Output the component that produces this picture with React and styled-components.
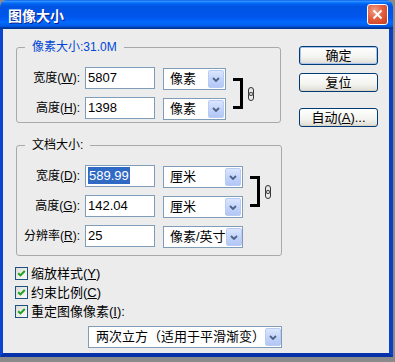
import React from "react";
import styled, { createGlobalStyle } from "styled-components";

const GlobalStyle = createGlobalStyle`
  html, body {
    margin: 0;
    padding: 0;
    background: #8a8a8a;
  }
  body {
    font-family: "Liberation Sans", "Noto Sans CJK SC", sans-serif;
    font-size: 12px;
    color: #000;
  }
`;

const Window = styled.div`
  width: 393px;
  height: 357px;
  display: flex;
  flex-direction: column;
  border-radius: 7px 7px 0 0;
  overflow: hidden;
`;

const TitleBar = styled.div`
  height: 29px;
  flex-shrink: 0;
  display: flex;
  align-items: center;
  justify-content: space-between;
  padding: 0 5px 0 8px;
  box-sizing: border-box;
  background: linear-gradient(
    to bottom,
    #0058ee 0%,
    #3a93ff 4%,
    #288eff 6%,
    #127dff 8%,
    #036ffc 10%,
    #0262ee 14%,
    #0057e5 20%,
    #0054e3 24%,
    #0055eb 56%,
    #005bf5 66%,
    #026afe 76%,
    #0062ef 86%,
    #0052d6 92%,
    #0040ab 94%,
    #003092 100%
  );
`;

const Title = styled.span`
  color: #fff;
  font-family: "Noto Sans CJK SC", sans-serif;
  font-weight: 700;
  font-size: 14px;
  line-height: 16px;
  text-shadow: 1px 1px #0a1e8a;
`;

const CloseButton = styled.div`
  width: 21px;
  height: 21px;
  box-sizing: border-box;
  border: 1px solid #fff;
  border-radius: 3px;
  background: radial-gradient(circle at 35% 30%, #f3a08a 0%, #e2613f 45%, #c8381b 100%);
  display: flex;
  align-items: center;
  justify-content: center;
`;

const Frame = styled.div`
  flex: 1;
  display: flex;
  background: #ececec;
  border-left: 3px solid #0b44cf;
  border-right: 4px solid #0b3fc4;
  border-bottom: 4px solid #0731a8;
  padding: 10px 11px 0 13px;
`;

const Main = styled.div`
  width: 266px;
  display: flex;
  flex-direction: column;
`;

const Group = styled.fieldset`
  margin: ${p => p.$top}px 0 0 0;
  padding: 12px 0 ${p => p.$bottom}px 0;
  border: 1px solid #a9a9a9;
  border-radius: 3px;
  width: ${p => p.$width}px;
  box-sizing: border-box;
  min-width: 0;
`;

const Legend = styled.legend`
  margin-left: 8px;
  padding: 0 7px;
  height: 16px;
  line-height: 16px;
  color: ${p => (p.$blue ? "#0046d5" : "#000")};
`;

const Rows = styled.div`
  display: grid;
  grid-template-columns: 68px 78px ${p => p.$selectWidth + 7}px 24px;
  grid-auto-rows: 22px;
  row-gap: 8px;
  align-items: start;
`;

const Label = styled.div`
  text-align: right;
  padding-right: 5px;
  line-height: 22px;
  white-space: nowrap;
`;

const InputBox = styled.div`
  width: 70px;
  height: 22px;
  box-sizing: border-box;
  border: 1px solid #7f9db9;
  background: #fff;
  padding-left: 2px;
  line-height: 20px;
  font-size: 13px;
`;

const Selected = styled.span`
  background: #316ac5;
  color: #fff;
  padding: 1px 1px;
`;

const Dropdown = styled.div`
  width: ${p => p.$width}px;
  height: 22px;
  margin-top: ${p => p.$shift || 0}px;
  box-sizing: border-box;
  border: 1px solid #7f9db9;
  background: #fff;
  display: flex;
  align-items: center;
  padding-left: ${p => p.$pad || 6}px;
  white-space: nowrap;
`;

const DropText = styled.span`
  font-size: 13px;
  line-height: 20px;
`;

const Arrow = styled.div`
  margin-left: auto;
  margin-right: 1px;
  width: 16px;
  height: 18px;
  box-sizing: border-box;
  border: 1px solid #b8cbf5;
  border-radius: 2px;
  background: linear-gradient(to bottom, #dbe6fd 0%, #c3d4fb 50%, #b3c7f5 100%);
  display: flex;
  align-items: center;
  justify-content: center;
  flex-shrink: 0;
`;

const LinkMark = styled.svg`
  grid-column: 4;
  grid-row: 1 / span 2;
`;

const Checks = styled.div`
  margin-top: 8px;
  margin-left: -1px;
  display: flex;
  flex-direction: column;
`;

const CheckRow = styled.div`
  height: 19px;
  display: flex;
  align-items: center;
  gap: 3px;
  line-height: 16px;
  font-size: 13px;
`;

const CheckBox = styled.span`
  width: 13px;
  height: 13px;
  box-sizing: border-box;
  border: 1px solid #1c5180;
  background: linear-gradient(135deg, #dcdcd7 0%, #fafaf9 100%);
  display: flex;
  align-items: center;
  justify-content: center;
`;

const ResampleRow = styled.div`
  margin-top: 5px;
  margin-left: 72px;
`;

const Side = styled.div`
  margin-left: 17px;
  padding-top: 7px;
  width: 79px;
  display: flex;
  flex-direction: column;
`;

const Button = styled.div`
  height: 19px;
  margin-top: ${p => p.$gap || 0}px;
  box-sizing: border-box;
  border: 1px solid #003c74;
  border-radius: 3px;
  background: linear-gradient(to bottom, #ffffff 0%, #f3f3ef 60%, #e4e2da 90%, #d6d0c5 100%);
  box-shadow: ${p => (p.$default ? "inset 0 0 0 1px #a8c4ef" : "none")};
  display: flex;
  align-items: center;
  justify-content: center;
  line-height: 16px;
  font-size: 13px;
`;

const Chevron = () => (
  <svg width="8" height="5" viewBox="0 0 8 5">
    <path d="M1 1 L4 4 L7 1" fill="none" stroke="#4d6185" strokeWidth="1.8" />
  </svg>
);

const Tick = () => (
  <svg width="11" height="11" viewBox="0 0 11 11">
    <path d="M2.2 5.2 L4.4 7.4 L8.8 3" fill="none" stroke="#21a121" strokeWidth="2" />
  </svg>
);

const Select = ({ width, text, shift, pad }) => (
  <Dropdown $width={width} $shift={shift} $pad={pad}>
    <DropText>{text}</DropText>
    <Arrow>
      <Chevron />
    </Arrow>
  </Dropdown>
);

const Bracket = () => (
  <LinkMark width="24" height="52" viewBox="0 0 24 52">
    <rect x="0" y="11" width="10" height="3" fill="#000" />
    <rect x="7" y="11" width="3" height="31" fill="#000" />
    <rect x="0" y="39" width="10" height="3" fill="#000" />
    <rect x="15.5" y="20.5" width="5" height="8" rx="2.5" fill="#e6e6e6" stroke="#333" />
    <rect x="15.5" y="25.5" width="5" height="8" rx="2.5" fill="none" stroke="#333" />
  </LinkMark>
);

const Check = ({ children }) => (
  <CheckRow>
    <CheckBox>
      <Tick />
    </CheckBox>
    <span>{children}</span>
  </CheckRow>
);

export default function App() {
  return (
    <>
      <GlobalStyle />
      <Window>
        <TitleBar>
          <Title>图像大小</Title>
          <CloseButton>
            <svg width="11" height="11" viewBox="0 0 11 11">
              <path d="M1.5 1.5 L9.5 9.5 M9.5 1.5 L1.5 9.5" stroke="#fff" strokeWidth="2" />
            </svg>
          </CloseButton>
        </TitleBar>
        <Frame>
          <Main>
            <Group $top={0} $bottom={3} $width={265}>
              <Legend $blue>像素大小:31.0M</Legend>
              <Rows $selectWidth={63}>
                <Label>宽度(<u>W</u>):</Label>
                <InputBox>5807</InputBox>
                <Select width={63} text="像素" shift={1} />
                <Bracket />
                <Label>高度(<u>H</u>):</Label>
                <InputBox>1398</InputBox>
                <Select width={63} text="像素" shift={1} />
              </Rows>
            </Group>
            <Group $top={14} $bottom={8} $width={266}>
              <Legend>文档大小:</Legend>
              <Rows $selectWidth={80}>
                <Label>宽度(<u>D</u>):</Label>
                <InputBox>
                  <Selected>589.99</Selected>
                </InputBox>
                <Select width={80} text="厘米" shift={1} />
                <Bracket />
                <Label>高度(<u>G</u>):</Label>
                <InputBox>142.04</InputBox>
                <Select width={80} text="厘米" shift={1} />
                <Label>分辨率(<u>R</u>):</Label>
                <InputBox>25</InputBox>
                <Select width={80} text="像素/英寸" shift={1} />
              </Rows>
            </Group>
            <Checks>
              <Check>缩放样式(<u>Y</u>)</Check>
              <Check>约束比例(<u>C</u>)</Check>
              <Check>重定图像像素(<u>I</u>):</Check>
            </Checks>
            <ResampleRow>
              <Select width={194} text="两次立方（适用于平滑渐变）" pad={7} />
            </ResampleRow>
          </Main>
          <Side>
            <Button $default>确定</Button>
            <Button $gap={8}>复位</Button>
            <Button $gap={16}>自动(<u>A</u>)...</Button>
          </Side>
        </Frame>
      </Window>
    </>
  );
}
